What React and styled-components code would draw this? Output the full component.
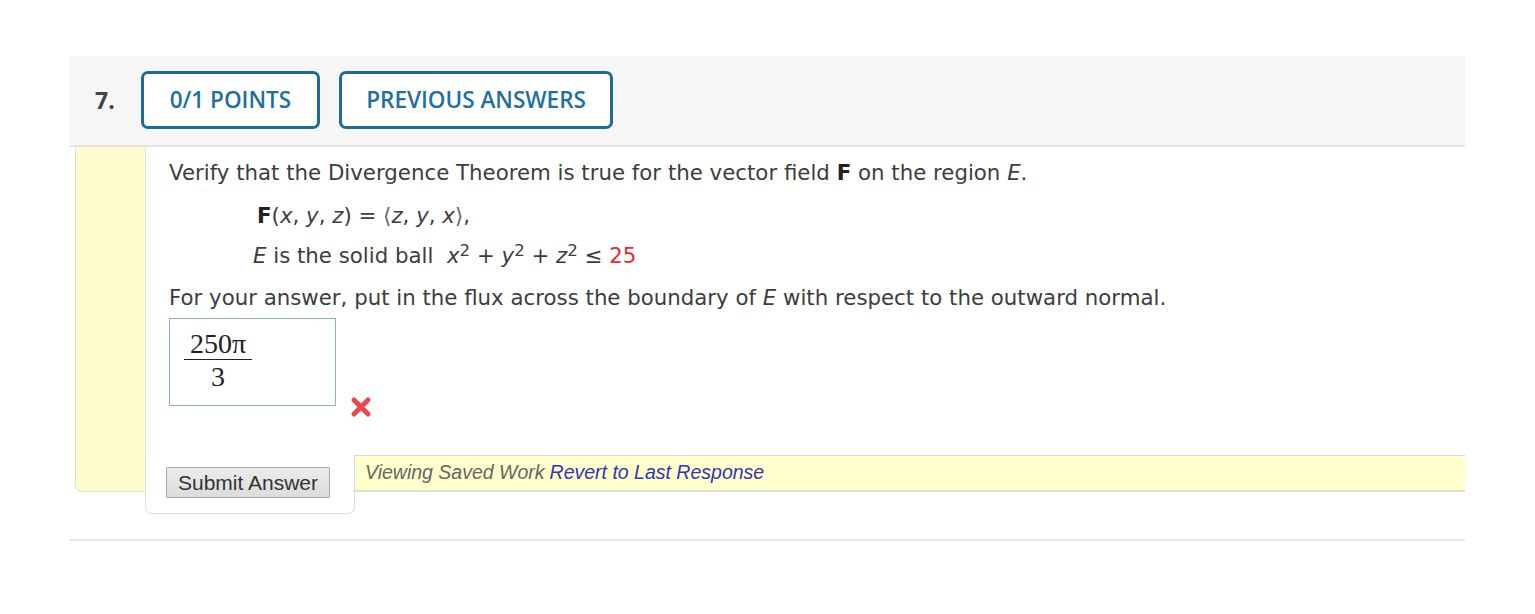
import React from "react";
import styled, { createGlobalStyle } from "styled-components";

const Global = createGlobalStyle`
  html, body { margin: 0; padding: 0; background: #fff; }
  body { font-family: "DejaVu Sans", Verdana, sans-serif; }
`;

const Page = styled.div`
  padding: 56px 0 0 70px;
  width: 1395px;
`;

const Header = styled.div`
  background: #f6f6f6;
  border-bottom: 2px solid #e4e4e4;
  display: flex;
  align-items: center;
  padding: 0 0 2px 25px;
  box-sizing: border-box;
  height: 91px;
  gap: 19px;
`;

const Num = styled.div`
  font-family: "Open Sans", sans-serif;
  font-weight: 700;
  font-size: 23px;
  color: #444;
  margin-right: 7px;
`;

const Pill = styled.div`
  height: 52px;
  box-sizing: content-box;
  border: 3px solid #1d6b98;
  border-radius: 7px;
  padding: 0 ${(p) => p.$pad}px;
  display: flex;
  align-items: center;
  font-family: "Open Sans", sans-serif;
  font-weight: 600;
  font-size: 22.5px;
  color: #1f6fa3;
  background: #fff;
`;

const Question = styled.div`
  margin-left: 5px;
  display: flex;
  background: #fffdd0;
  border: 1px solid #ddd;
  border-top: none;
  border-right: none;
  border-radius: 0 0 0 7px;
  height: 345px;
  box-sizing: border-box;
`;

const Strip = styled.div`
  width: 69px;
  flex: none;
`;

const Content = styled.div`
  flex: 1;
  background: #fff;
  border-left: 1px solid #e6e6de;
  display: flex;
  flex-direction: column;
`;

const Body = styled.div`
  flex: 1;
  padding: 13px 0 0 23px;
  color: #3d3d3d;
  font-family: "DejaVu Sans", Verdana, sans-serif;
  font-size: 21.3px;
  line-height: 26px;
`;

const P = styled.div`
  margin: ${(p) => p.$m || "0"};
  padding-left: ${(p) => p.$indent || 0}px;
  height: 26px;
  white-space: nowrap;
`;

const I = styled.i``;
const B = styled.b`color: #222;`;
const Red = styled.span`color: #e8292f;`;
const Sup = styled.sup`
  font-size: 0.78em;
  line-height: 0;
  vertical-align: 0.45em;
`;
const Angle = styled.span`
  color: #666;
`;

const AnswerRow = styled.div`
  display: flex;
  align-items: flex-end;
  margin-top: 7px;
`;

const AnswerBox = styled.div`
  border: 1px solid #86aed6;
  background: #fff;
  display: flex;
  align-items: flex-start;
  padding: 11px 0 0 14px;
  box-sizing: content-box;
  width: 151px;
  height: 75px;
`;

const Frac = styled.div`
  display: inline-flex;
  flex-direction: column;
  align-items: center;
  font-family: "Liberation Serif", "Times New Roman", serif;
  font-size: 28px;
  line-height: 28px;
  color: #222;
`;

const Numer = styled.span`
  padding: 0 6px 1px;
`;

const Denom = styled.span`
  border-top: 1px solid #222;
  align-self: stretch;
  text-align: center;
  padding-top: 3px;
`;

const XMark = styled.svg`
  width: 22px;
  height: 22px;
  margin: 0 0 -12px 14px;
`;

const Footer = styled.div`
  display: flex;
  align-items: flex-start;
  height: 36px;
`;

const SubmitCell = styled.div`
  width: 188px;
  height: 46px;
  flex: none;
  padding: 12px 0 0 20px;
  background: #fff;
  border: 1px solid #ddd;
  border-top: none;
  border-left-color: #e2e2e2;
  border-radius: 0 0 7px 7px;
  margin-left: -1px;
  position: relative;
  z-index: 1;
`;

const SubmitBtn = styled.button`
  width: 164px;
  height: 31px;
  padding: 0;
  font-family: "Liberation Sans", Arial, sans-serif;
  font-size: 21px;
  color: #333;
  background: linear-gradient(#ececec, #dcdcdc);
  border: 1px solid #a9a9a9;
  border-radius: 1px;
`;

const Saved = styled.div`
  flex: 1;
  height: 36px;
  box-sizing: border-box;
  background: #ffffcc;
  border-top: 1px solid #dcdcd0;
  border-bottom: 1px solid #dcdcd0;
  display: flex;
  align-items: center;
  padding: 0 0 2px 10px;
  font-family: "Liberation Sans", Arial, sans-serif;
  font-style: italic;
  font-size: 19.5px;
  color: #666;
`;

const Link = styled.span`
  color: #3333bb;
  margin-left: 5px;
`;

const Rule = styled.div`
  margin-top: 47px;
  height: 2px;
  background: #e8e8e8;
`;

export default function App() {
  return (
    <>
      <Global />
      <Page>
        <Header>
          <Num>7.</Num>
          <Pill $pad={26}>0/1 POINTS</Pill>
          <Pill $pad={24}>PREVIOUS ANSWERS</Pill>
        </Header>
        <Question>
          <Strip />
          <Content>
            <Body>
              <P>
                Verify that the Divergence Theorem is true for the vector field <B>F</B> on the region <I>E</I>.
              </P>
              <P $m="17px 0 0 0" $indent={88}>
                <B>F</B>(<I>x</I>, <I>y</I>, <I>z</I>) = <Angle>⟨</Angle><I>z</I>, <I>y</I>, <I>x</I><Angle>⟩</Angle>,
              </P>
              <P $m="14px 0 0 0" $indent={84}>
                <I>E</I> is the solid ball&nbsp; <I>x</I><Sup>2</Sup> + <I>y</I><Sup>2</Sup> + <I>z</I><Sup>2</Sup> ≤ <Red>25</Red>
              </P>
              <P $m="16px 0 0 0">
                For your answer, put in the flux across the boundary of <I>E</I> with respect to the outward normal.
              </P>
              <AnswerRow>
                <AnswerBox>
                  <Frac>
                    <Numer>250π</Numer>
                    <Denom>3</Denom>
                  </Frac>
                </AnswerBox>
                <XMark viewBox="0 0 22 22">
                  <path d="M4 4 L18 18 M18 4 L4 18" stroke="#ea4750" strokeWidth="5" strokeLinecap="round" />
                </XMark>
              </AnswerRow>
            </Body>
            <Footer>
              <SubmitCell>
                <SubmitBtn>Submit Answer</SubmitBtn>
              </SubmitCell>
              <Saved>
                Viewing Saved Work<Link>Revert to Last Response</Link>
              </Saved>
            </Footer>
          </Content>
        </Question>
        <Rule />
      </Page>
    </>
  );
}
